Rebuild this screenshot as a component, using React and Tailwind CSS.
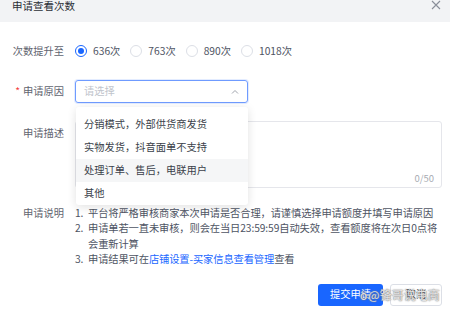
import React from "react";

const font = { fontFamily: '"Noto Sans CJK SC", "Noto Sans", sans-serif' };

function Radio({ checked, label }) {
  return (
    <div className="flex items-center gap-[6px]">
      <span
        className={
          "w-[12px] h-[12px] rounded-full border flex items-center justify-center bg-white " +
          (checked ? "border-[#1966ff]" : "border-[#dcdfe6]")
        }
      >
        {checked && <span className="w-[6px] h-[6px] rounded-full bg-[#1966ff]" />}
      </span>
      <span className="text-[#4e5463]">{label}</span>
    </div>
  );
}

export default function App() {
  return (
    <div
      className="relative w-[450px] h-[317px] bg-white overflow-hidden text-[10.25px] leading-none"
      style={font}
    >
      {/* header */}
      <div className="h-[22px] bg-[#f2f3f5] flex items-start justify-between pl-[12px] pr-[9px]">
        <span className="text-[10.5px] text-[#2b2f36] mt-[-1px] leading-[14px]">申请查看次数</span>
        <svg width="10" height="10" viewBox="0 0 10 10" className="mt-[0px]">
          <path d="M1 1L9 9M9 1L1 9" stroke="#8a8f99" strokeWidth="1.1" />
        </svg>
      </div>

      {/* row 1 */}
      <div className="flex items-center mt-[22px] h-[14px]">
        <div className="w-[64px] text-right text-[#5f6470]">次数提升至</div>
        <div className="ml-[11px] flex items-center gap-[10px]">
          <Radio checked label="636次" />
          <Radio label="763次" />
          <Radio label="890次" />
          <Radio label="1018次" />
        </div>
      </div>

      {/* row 2 */}
      <div className="flex items-center mt-[22px]">
        <div className="w-[64px] text-right text-[#5f6470]">
          <span className="text-[#f53f3f] mr-[3px]">*</span>申请原因
        </div>
        <div className="ml-[11px] w-[173px] h-[23px] border border-[#6f9bff] rounded-[3px] flex items-center justify-between pl-[8px] pr-[8px] shadow-[0_0_0_1px_rgba(64,128,255,0.15)]">
          <span className="text-[#c0c4cc]">请选择</span>
          <svg width="8" height="6" viewBox="0 0 8 6">
            <path d="M1 4.5L4 1.5L7 4.5" stroke="#a0a4ad" strokeWidth="1" fill="none" />
          </svg>
        </div>
      </div>

      {/* row 3 textarea */}
      <div className="flex items-start mt-[18px]">
        <div className="w-[64px] text-right text-[#5f6470] mt-[7px]">申请描述</div>
        <div className="ml-[11px] w-[367px] h-[67px] border border-[#e5e6eb] rounded-[3px] relative">
          <span className="absolute right-[7px] bottom-[4px] text-[9.5px] text-[#a8abb2]">0/50</span>
        </div>
      </div>

      {/* row 4 notes */}
      <div className="flex items-start mt-[20px]">
        <div className="w-[64px] text-right text-[#5f6470]">申请说明</div>
        <div className="ml-[11px] text-[#4e5463] flex flex-col gap-[5px] tracking-[-0.1px]">
          <div className="flex">
            <span className="w-[13px]">1.</span>
            <span className="whitespace-nowrap">平台将严格审核商家本次申请是否合理，请谨慎选择申请额度并填写申请原因</span>
          </div>
          <div className="flex">
            <span className="w-[13px]">2.</span>
            <span className="whitespace-nowrap leading-[16px] mt-[-3px]">
              申请单若一直未审核，则会在当日23:59:59自动失效，查看额度将在次日0点将
              <br />
              会重新计算
            </span>
          </div>
          <div className="flex mt-[-3px]">
            <span className="w-[13px]">3.</span>
            <span>
              申请结果可在<span className="text-[#1966ff]">店铺设置-买家信息查看管理</span>查看
            </span>
          </div>
        </div>
      </div>

      {/* buttons */}
      <div className="flex justify-end gap-[7px] pr-[8px] mt-[19px]">
        <button className="w-[65px] h-[22px] bg-[#1966ff] text-white rounded-[3px] text-[10.25px]">提交申请</button>
        <button className="w-[52px] h-[22px] bg-white border border-[#dcdfe6] text-[#3a3f4a] rounded-[3px] text-[10.25px]">取消</button>
      </div>

      {/* dropdown overlay */}
      <div className="absolute left-[76px] top-[107px] w-[172px] h-[98px] bg-white rounded-[3px] shadow-[0_2px_10px_rgba(0,0,0,0.12)] py-[6px] text-[#3a3f4a]">
        <div className="h-[23px] flex items-center pl-[8px]">分销模式，外部供货商发货</div>
        <div className="h-[23px] flex items-center pl-[8px]">实物发货，抖音面单不支持</div>
        <div className="h-[23px] flex items-center pl-[8px] bg-[#f5f6f7]">处理订单、售后，电联用户</div>
        <div className="h-[22px] flex items-center pl-[8px]">其他</div>
      </div>

      {/* watermark */}
      <div
        className="absolute left-[360px] top-[289px] flex items-center text-[12px] text-white/80"
        style={{ textShadow: "0 0 1px #666, 0 0 2px #888" }}
      >
        <span className="mr-[1px]">ö</span>@锋哥说电商
      </div>
    </div>
  );
}
